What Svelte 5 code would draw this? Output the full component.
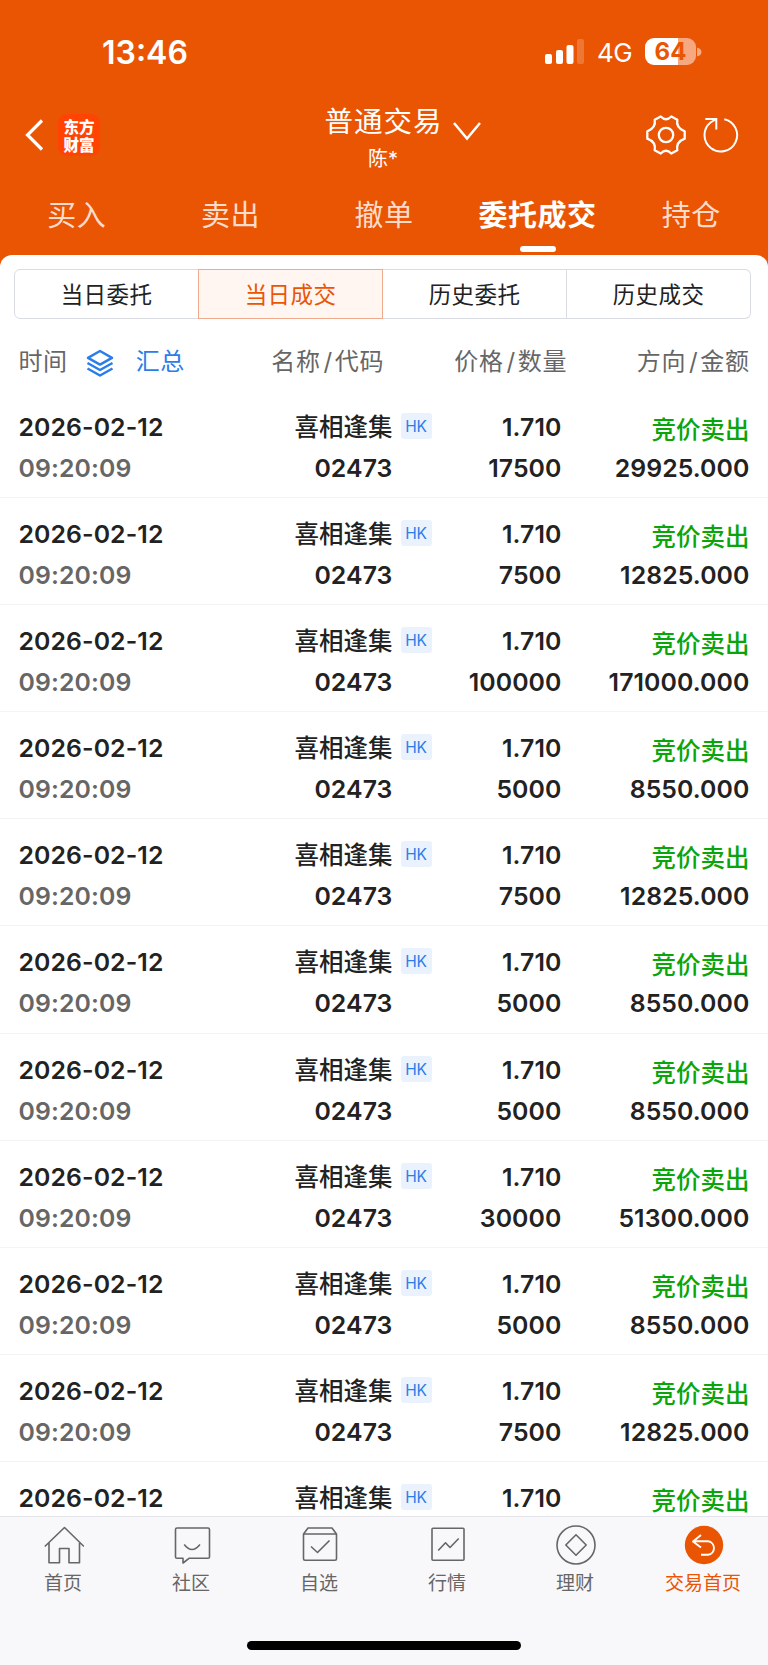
<script>
  const tabs = ["买入", "卖出", "撤单", "委托成交", "持仓"];
  const filters = ["当日委托", "当日成交", "历史委托", "历史成交"];
  const columns = [
    ["名称", "代码"],
    ["价格", "数量"],
    ["方向", "金额"],
  ];
  const navs = ["首页", "社区", "自选", "行情", "理财", "交易首页"];

  let activeTab = $state(3);
  let activeFilter = $state(1);

  const deals = [
    [17500, "29925.000"],
    [7500, "12825.000"],
    [100000, "171000.000"],
    [5000, "8550.000"],
    [7500, "12825.000"],
    [5000, "8550.000"],
    [5000, "8550.000"],
    [30000, "51300.000"],
    [5000, "8550.000"],
    [7500, "12825.000"],
    [5000, "8550.000"],
  ];
</script>

<div class="screen">
  <header>
    <div class="status">
      <span class="clock">13:46</span>
      <div class="signals">
        <svg width="40" height="25" viewBox="0 0 40 25" fill="#fff">
          <rect x="0" y="15" width="7" height="10" rx="2" />
          <rect x="11" y="11" width="7" height="14" rx="2" />
          <rect x="21.500" y="6" width="7" height="19" rx="2" />
          <rect x="32" y="0" width="7" height="25" rx="2" opacity=".2" />
        </svg>
        <span class="net">4G</span>
        <div class="battery"><span>64</span></div>
        <svg class="tip" width="5" height="10" viewBox="0 0 5 10"><path d="M0 0.500Q4.500 1.500 4.500 5T0 9.500Z" fill="#f6a880" /></svg>
      </div>
    </div>

    <div class="bar">
      <div class="side">
        <svg width="20" height="32" viewBox="0 0 20 32" fill="none" stroke="#fff" stroke-width="3.200"><path d="M18 1.500L3.500 16L18 30.500" /></svg>
        <div class="logo"><span>东方</span><span>财富</span></div>
      </div>
      <div class="title">
        <div class="name">普通交易</div>
        <div class="user">陈*</div>
        <svg class="chev" width="28" height="19" viewBox="0 0 28 19" fill="none" stroke="#fff" stroke-width="2.500"><path d="M1 1L14 16.500L27 1" /></svg>
      </div>
      <div class="side right">
        <svg width="40" height="40" viewBox="0 0 40 40" fill="none" stroke="#fff" stroke-width="2.300" stroke-linejoin="round">
          <circle cx="20" cy="20" r="7.200" />
          <path d="M14.700 1.500Q20 7 25.300 1.500L31.300 4.800Q29.800 13 38.700 16.300V23.700Q29.800 27 31.300 35.200L25.300 38.500Q20 33 14.700 38.500L8.700 35.200Q10.200 27 1.300 23.700V16.300Q10.200 13 8.700 4.800Z" />
        </svg>
        <svg width="36" height="36" viewBox="0 0 36 36" fill="none" stroke="#fff" stroke-width="2">
          <path d="M21.300 2.200A16.300 16.300 0 1 1 7.500 5.500L13.300 2" />
          <path d="M2.300 2H13.300V12.500" />
        </svg>
      </div>
    </div>

    <nav class="tabs">
      {#each tabs as tab, i}
        <button class:active={activeTab === i} onclick={() => (activeTab = i)}>{tab}</button>
      {/each}
    </nav>
  </header>

  <main>
    <div class="filters">
      {#each filters as filter, i}
        <button class:active={activeFilter === i} onclick={() => (activeFilter = i)}>{filter}</button>
      {/each}
    </div>

    <div class="grid head">
      <div class="when">
        <span>时间</span>
        <svg width="28" height="28" viewBox="0 0 28 28" fill="none" stroke="#2b7de9" stroke-width="2.500" stroke-linejoin="round">
          <path d="M14 2L26 8.800L14 15.600L2 8.800Z" />
          <path d="M1.500 14L14 21L26.500 14M1.500 19.500L14 26.500L26.500 19.500" />
        </svg>
        <span class="sum">汇总</span>
      </div>
      {#each columns as [top, bottom]}
        <div>{top}<span class="slash">/</span>{bottom}</div>
      {/each}
    </div>

    {#each deals as [amount, total]}
      <div class="grid row">
        <div class="when">
          <p>2026-02-12</p>
          <p class="time">09:20:09</p>
        </div>
        <div class="stock">
          <p class="cn">喜相逢集<span class="hk">HK</span></p>
          <p>02473</p>
        </div>
        <div>
          <p>1.710</p>
          <p>{amount}</p>
        </div>
        <div>
          <p class="cn sell">竞价卖出</p>
          <p>{total}</p>
        </div>
      </div>
    {/each}
  </main>

  <footer>
    <div class="navs">
      {#each navs as nav, i}
        <div class="nav" class:current={i === 5}>
          <svg width="40" height="40" viewBox="0 0 40 40" fill="none" stroke="#666" stroke-width="1.600" stroke-linejoin="round">
            {#if i === 0}
              <path d="M.8 21.500L20.500 2.500L40 21.500M5 18V37.700H15.500V23.500H25V37.700H35.500V18" />
            {:else if i === 1}
              <path d="M5 3H36Q37.500 3 37.500 4.500V32Q37.500 33.300 36 33.300H17L11 38V33.300H5Q3.500 33.300 3.500 32V4.500Q3.500 3 5 3Z" />
              <path d="M12.200 19.500Q20 29.500 28 19.500" />
            {:else if i === 2}
              <path d="M3.500 9L8 3H32L36.500 9M3.500 9H36.500V33.700Q36.500 35.200 35 35.200H5Q3.500 35.200 3.500 33.700Z" />
              <path d="M11 21.500L17.500 27.500L29.500 15.500" />
            {:else if i === 3}
              <rect x="4" y="3.200" width="32" height="32" rx="1" />
              <path d="M10.200 25.500L17.500 17.800L22 22.500L30.700 13.500" />
            {:else if i === 4}
              <circle cx="20" cy="20" r="19" />
              <path d="M20 9.800L30.200 20L20 30.200L9.800 20Z" />
            {:else}
              <circle cx="20" cy="20" r="19.200" fill="#ea5504" stroke="none" />
              <path d="M17 10L9 16.500L17 22.500M9.500 16.300H24A6.800 6.800 0 0 1 24 29.800H17" stroke="#fff" stroke-width="1.900" />
            {/if}
          </svg>
          <span>{nav}</span>
        </div>
      {/each}
    </div>
    <div class="home"></div>
  </footer>
</div>

<style>
  :global(body) {
    margin: 0;
  }
  .screen {
    width: 768px;
    height: 1665px;
    display: flex;
    flex-direction: column;
    overflow: hidden;
    background: #ea5504;
    color: #222;
    font-family: Inter, "Noto Sans CJK SC", sans-serif;
  }
  p {
    margin: 0;
  }
  svg {
    display: block;
    flex: none;
  }
  button {
    border: 0;
    padding: 0;
    background: none;
    font: inherit;
    color: inherit;
  }

  header {
    height: 255px;
    flex: none;
    color: #fff;
  }
  .status {
    height: 103px;
    box-sizing: border-box;
    padding: 0 66px 0 102px;
    display: flex;
    align-items: center;
    justify-content: space-between;
  }
  .clock {
    padding-top: 2px;
    font-size: 32px;
    font-weight: 600;
  }
  .signals {
    display: flex;
    align-items: center;
  }
  .net {
    width: 48px;
    margin-left: 12px;
    padding-top: 3px;
    font-size: 26px;
    letter-spacing: -.5px;
    line-height: 30px;
  }
  .battery {
    width: 51px;
    height: 27px;
    border-radius: 9px;
    background: linear-gradient(90deg, #fff 64%, #f6a880 64%);
    color: #ea5504;
    font-size: 24px;
    line-height: 27px;
    font-weight: 700;
    text-align: center;
  }
  .tip {
    margin-left: 1px;
  }

  .bar {
    height: 79px;
    display: grid;
    grid-template-columns: 1fr 240px 1fr;
  }
  .side {
    display: flex;
    align-items: center;
    padding: 0 0 15px 24px;
    height: 63px;
  }
  .side.right {
    justify-content: flex-end;
    gap: 17px;
    padding: 0 29px 15px 0;
  }
  .logo {
    width: 42px;
    height: 42px;
    margin-left: 14px;
    border-radius: 9px;
    background: #ff4303;
    display: flex;
    flex-direction: column;
    align-items: center;
    justify-content: center;
    font: 900 15.500px/18px "Noto Sans CJK SC", sans-serif;
  }
  .title {
    position: relative;
    text-align: center;
  }
  .name {
    padding-top: 1px;
    font-size: 28.500px;
    line-height: 35px;
    letter-spacing: 1px;
    margin-left: -1px;
  }
  .user {
    margin: 5px 2px 0 0;
    font-size: 20px;
    line-height: 30px;
  }
  .chev {
    position: absolute;
    left: 189px;
    top: 19px;
  }
  .tabs {
    display: grid;
    grid-template-columns: repeat(5, 1fr);
    height: 73px;
  }
  .tabs button {
    display: flex;
    flex-direction: column;
    align-items: center;
    font-size: 29px;
    line-height: 68px;
    letter-spacing: .5px;
    color: #fddccb;
  }
  .tabs button.active {
    color: #fff;
    font-weight: 700;
  }
  .tabs button.active::after {
    content: "";
    width: 36px;
    height: 6px;
    margin-top: -4px;
    border-radius: 3px;
    background: #fff;
  }

  main {
    flex: 1;
    min-height: 0;
    overflow: hidden;
    border-radius: 12px 12px 0 0;
    background: #fff;
  }
  .filters {
    display: flex;
    height: 50px;
    margin: 14px 17px 0 14px;
  }
  .filters button {
    flex: 1;
    border: 1px solid #d9dce2;
    border-left-width: 0;
    padding-bottom: 2px;
    font-size: 22.500px;
    letter-spacing: .4px;
  }
  .filters button:first-child {
    border-left-width: 1px;
    border-radius: 6px 0 0 6px;
  }
  .filters button:last-child {
    border-radius: 0 6px 6px 0;
  }
  .filters button.active {
    margin-left: -1px;
    border: 1px solid #f0a98a;
    background: #fff5f1;
    color: #ea5504;
  }

  .grid {
    display: grid;
    grid-template-columns: 200px 173.500px 169px 188.500px;
    padding: 0 18.500px;
    text-align: right;
  }
  .when {
    text-align: left;
  }
  .head {
    height: 71.500px;
    line-height: 85px;
    font-size: 24px;
    letter-spacing: .6px;
    color: #666;
  }
  .head > div:nth-child(2) {
    margin-right: 8px;
  }
  .head > div:nth-child(3) {
    margin-right: -6px;
  }
  .slash {
    padding: 0 2px 0 3px;
  }
  .head .when {
    display: flex;
  }
  .head svg {
    margin: 30px 22px 0 18px;
  }
  .sum {
    color: #2b7de9;
  }

  .row {
    height: 107.200px;
    box-sizing: border-box;
    padding-top: 16px;
    border-bottom: 1px solid #f4f4f6;
    font-size: 24.800px;
    font-weight: 600;
    line-height: 41px;
    letter-spacing: .1px;
  }
  .row p {
    height: 41px;
  }
  .row .time {
    color: #666;
  }
  .stock p,
  .row > div:nth-child(3) p {
    margin-right: -.5px;
  }
  .stock .cn {
    position: relative;
  }
  .row .cn {
    font-size: 24.500px;
    font-weight: 500;
    letter-spacing: 0;
  }
  .hk {
    position: absolute;
    left: 100%;
    top: 6px;
    width: 31px;
    height: 26px;
    margin-left: 8px;
    border-radius: 3px;
    background: #e9f2fd;
    color: #2b7de9;
    font-size: 15.500px;
    font-weight: 400;
    line-height: 27px;
    letter-spacing: -.3px;
    text-align: center;
  }
  .row .sell {
    color: #0aa50a;
    line-height: 46px;
  }

  footer {
    height: 149px;
    box-sizing: border-box;
    flex: none;
    border-top: 1px solid #e4e4ea;
    background: #f8f8fb;
  }
  .navs {
    display: grid;
    grid-template-columns: repeat(6, 1fr);
    height: 124px;
  }
  .nav {
    display: flex;
    flex-direction: column;
    align-items: center;
    padding-top: 8px;
    font-size: 19px;
    line-height: 37px;
    color: #666;
  }
  .nav span {
    margin-right: 2px;
  }
  .current {
    color: #ea5504;
  }
  .home {
    width: 274px;
    height: 9px;
    margin: 0 auto;
    border-radius: 5px;
    background: #000;
  }
</style>
